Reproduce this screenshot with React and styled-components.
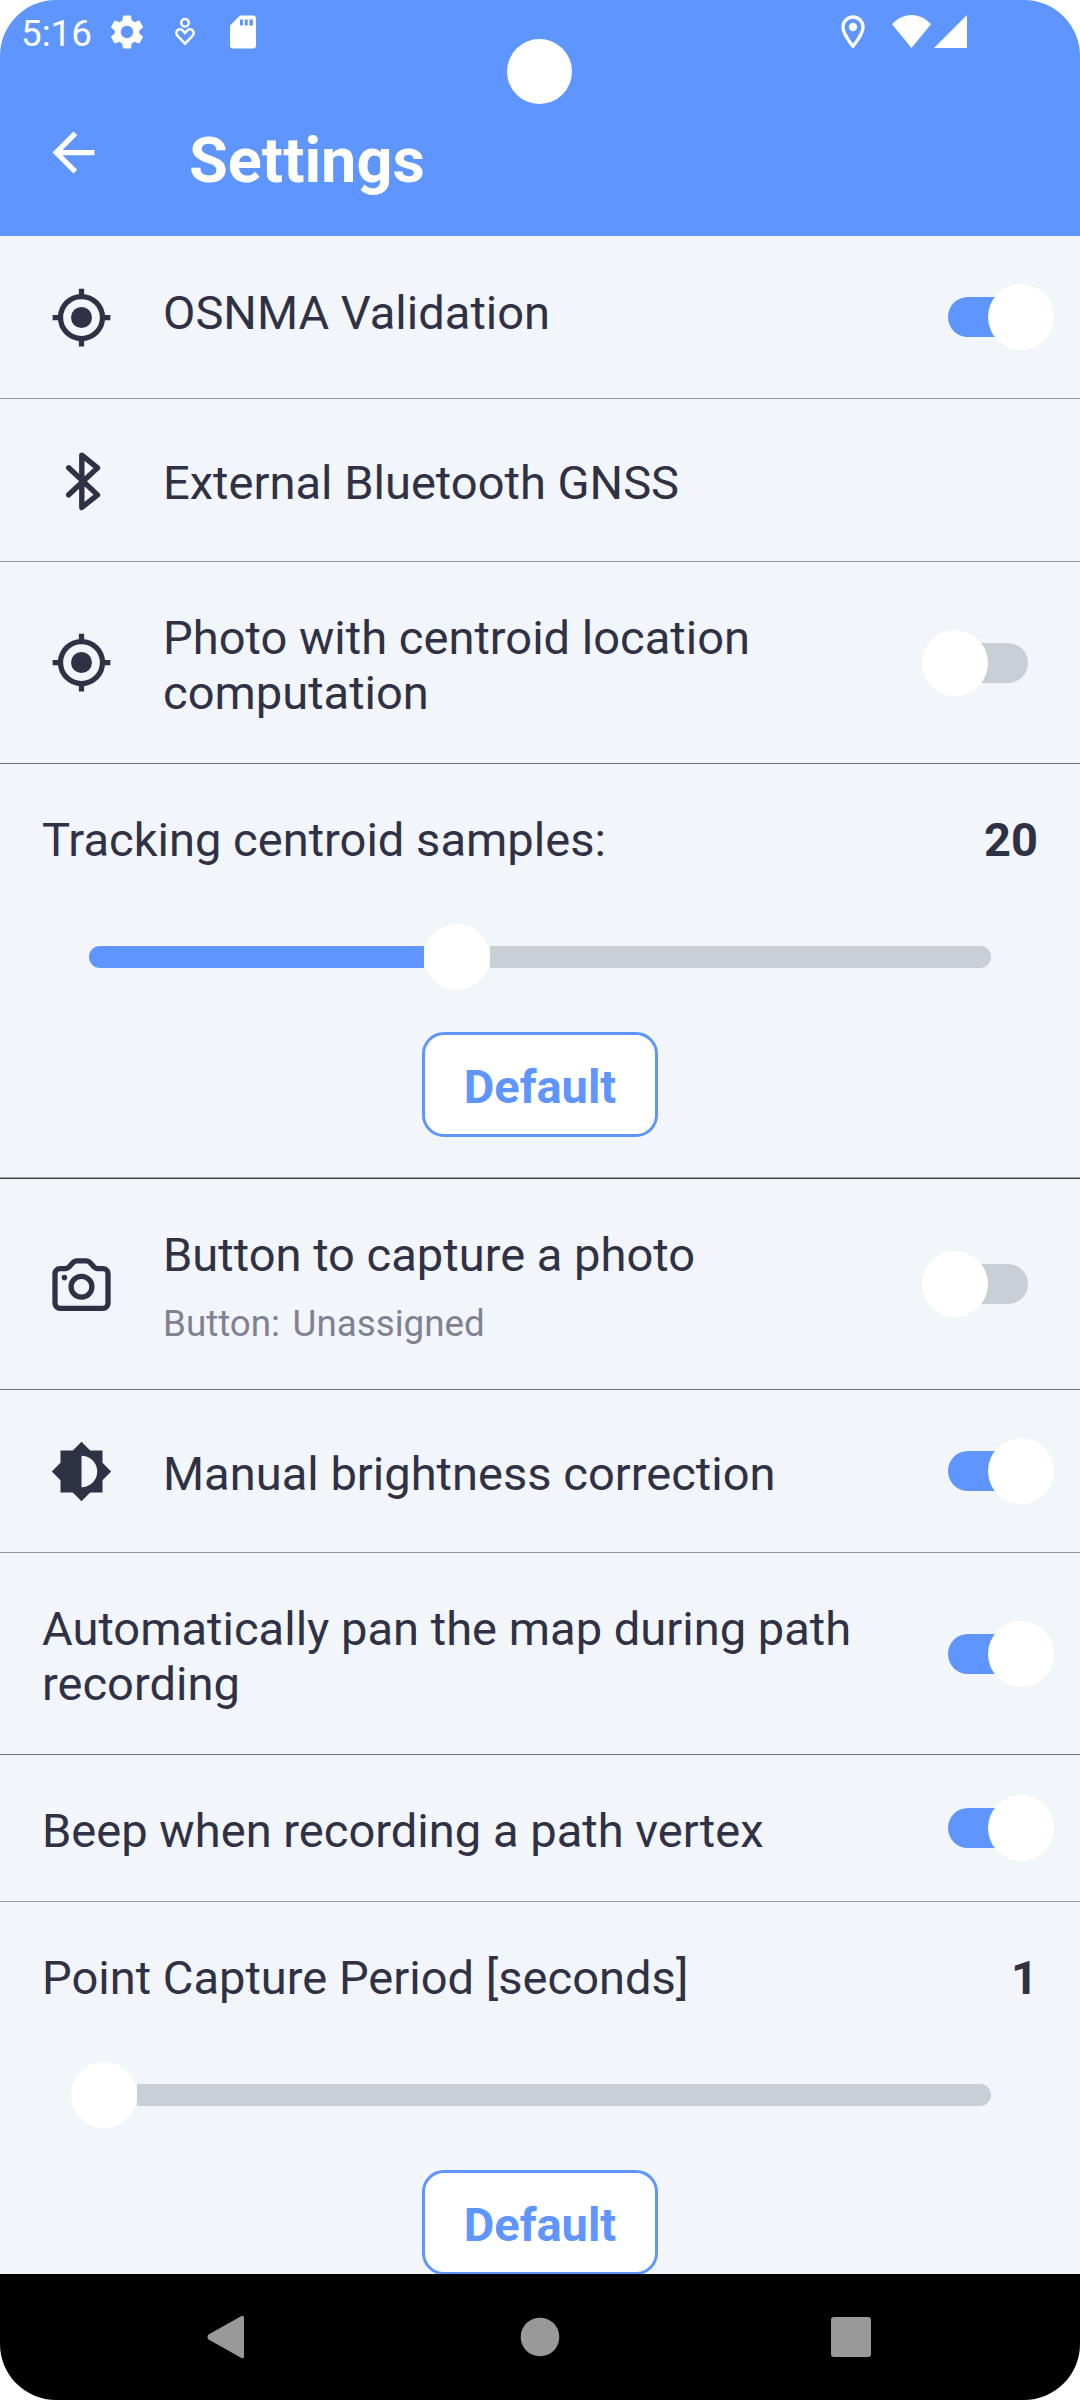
import React from "react";
import styled, { createGlobalStyle, css } from "styled-components";

const color = {
  primary: "#5e95ff",
  surface: "#f2f5fa",
  text: "#2f3144",
  muted: "#7f8291",
  track: "#cacfd6",
  nav: "#999999",
};

const GlobalStyle = createGlobalStyle`
  * { box-sizing: border-box; }
  html, body { margin: 0; padding: 0; background: #fff; }
  svg { display: block; flex: none; }
`;

const Screen = styled.div`
  position: relative;
  display: flex;
  flex-direction: column;
  width: 1080px;
  height: 2400px;
  overflow: hidden;
  border-radius: 56px;
  background: ${color.surface};
  color: ${color.text};
  font-family: Roboto, "Liberation Sans", sans-serif;
`;

const Header = styled.header`
  flex: none;
  height: 236px;
  background: ${color.primary};
  color: #fff;
`;

const StatusBar = styled.div`
  display: flex;
  justify-content: space-between;
  align-items: center;
  height: 63px;
  padding: 0 113px 0 21px;
`;

const StatusGroup = styled.div`
  display: flex;
  align-items: center;
  gap: ${(p) => p.$gap}px;
`;

const Clock = styled.span`
  width: 68px;
  padding-top: 4px;
  font-size: 36.75px;
  line-height: 44px;
  white-space: nowrap;
`;

const SignalPair = styled.div`
  display: flex;
  gap: 3px;
`;

const CameraHole = styled.div`
  position: absolute;
  top: 39px;
  left: 507px;
  width: 65px;
  height: 65px;
  border-radius: 50%;
  background: #fff;
`;

const AppBar = styled.div`
  display: flex;
  align-items: flex-start;
  gap: 84px;
  padding: 58px 42px 0;
`;

const Title = styled.h1`
  margin: 3px 0 0;
  font-size: 63px;
  line-height: 74px;
  font-weight: 700;
`;

const List = styled.main`
  flex: 1;
  min-height: 0;
  overflow: hidden;
`;

const divided = css`
  border-bottom: 1px solid ${(p) => p.$line || "#8f9397"};
`;

const Row = styled.div`
  display: flex;
  align-items: center;
  height: ${(p) => p.$height}px;
  padding: 0 26px 0 42px;
  ${divided}
`;

const IconBox = styled.div`
  flex: none;
  width: 121px;
  padding-left: 8px;
`;

const Texts = styled.div`
  flex: 1;
  display: flex;
  flex-direction: column;
  gap: 20px;
  padding: ${(p) => p.$pad || "5px 0 0"};
`;

const Label = styled.span`
  font-size: 47.08px;
  line-height: 55px;
`;

const Hint = styled.span`
  font-size: 36.75px;
  line-height: 43px;
  color: ${color.muted};
  word-spacing: 3.5px;
`;

const SwitchTrack = styled.div`
  display: flex;
  align-items: center;
  justify-content: ${(p) => (p.$on ? "flex-end" : "flex-start")};
  flex: none;
  width: 80px;
  height: 40px;
  margin: 0 26px;
  border-radius: 20px;
  background: ${(p) => (p.$on ? color.primary : color.track)};
`;

const Knob = styled.div`
  flex: none;
  width: 66px;
  height: 66px;
  border-radius: 50%;
  background: #fff;
`;

const SwitchKnob = styled(Knob)`
  margin: ${(p) => (p.$on ? "0 -26px 0 0" : "0 0 0 -26px")};
`;

const Section = styled.section`
  display: flex;
  flex-direction: column;
  align-items: center;
  height: ${(p) => p.$height}px;
  padding: 48px 42px 0;
  ${divided}
  box-shadow: inset 0 -1px #a6a8ac;
`;

const SectionHead = styled.div`
  align-self: stretch;
  display: flex;
  justify-content: space-between;
`;

const Value = styled.span`
  font-size: 47px;
  line-height: 55px;
  font-weight: 700;
`;

const Slider = styled.div`
  display: flex;
  align-items: center;
  width: 902px;
  margin: 57px 0 42px;
`;

const Filled = styled.div`
  flex: none;
  height: 22px;
  border-radius: 11px 0 0 11px;
  background: ${color.primary};
`;

const SliderKnob = styled(Knob)`
  margin-left: ${(p) => (p.$atStart ? -18 : 0)}px;
`;

const Remaining = styled.div`
  flex: 1;
  height: 22px;
  border-radius: 0 11px 11px 0;
  background: ${color.track};
`;

const DefaultButton = styled.button`
  flex: none;
  width: 236px;
  height: 105px;
  padding: 3px 0 0;
  border: 3px solid ${color.primary};
  border-radius: 22px;
  background: #fff;
  color: ${color.primary};
  font: 700 47px/55px Roboto, "Liberation Sans", sans-serif;
`;

const NavBar = styled.nav`
  flex: none;
  display: flex;
  justify-content: space-between;
  align-items: center;
  height: 126px;
  padding: 0 205px 0 203px;
  background: #000;
`;

const HomeButton = styled.div`
  margin-left: 7px;
`;

const GearIcon = () => (
  <svg width="40" height="40" viewBox="0 0 24 24" fill="#fff">
    <path d="M19.14 12.94c.04-.3.06-.61.06-.94 0-.32-.02-.64-.07-.94l2.03-1.58c.18-.14.23-.41.12-.61l-1.92-3.32c-.12-.22-.37-.29-.59-.22l-2.39.96c-.5-.38-1.03-.7-1.62-.94L14.4 2.81c-.04-.24-.24-.41-.48-.41h-3.84c-.24 0-.43.17-.47.41l-.36 2.54c-.59.24-1.13.57-1.62.94l-2.39-.96c-.22-.08-.47 0-.59.22L2.74 8.87c-.12.21-.08.47.12.61l2.03 1.58c-.05.3-.09.63-.09.94s.02.64.07.94l-2.03 1.58c-.18.14-.23.41-.12.61l1.92 3.32c.12.22.37.29.59.22l2.39-.96c.5.38 1.03.7 1.62.94l.36 2.54c.05.24.24.41.48.41h3.84c.24 0 .44-.17.47-.41l.36-2.54c.59-.24 1.13-.56 1.62-.94l2.39.96c.22.08.47 0 .59-.22l1.92-3.32c.12-.22.07-.47-.12-.61l-2.01-1.58zM12 15.6c-1.98 0-3.6-1.62-3.6-3.6s1.62-3.6 3.6-3.6 3.6 1.62 3.6 3.6-1.62 3.6-3.6 3.6z" transform="translate(12 12) scale(1.03) translate(-12 -12)" />
  </svg>
);

const HeartPersonIcon = () => (
  <svg width="40" height="40" viewBox="0 0 40 40" fill="none" stroke="#fff" strokeWidth="2.5">
    <circle cx="20" cy="10.8" r="3.8" />
    <path d="M20 31.6l-7.2-7.4c-2-2.1-1.9-4.5-.4-5.9 1.7-1.5 4.2-1.2 5.6.4l2 2.3 2-2.3c1.4-1.6 3.9-1.9 5.6-.4 1.5 1.4 1.6 3.8-.4 5.9z" />
  </svg>
);

const SdCardIcon = () => (
  <svg width="40" height="40" viewBox="0 0 40 40" fill="#fff">
    <path fillRule="evenodd" d="M17 3.5h13a3 3 0 0 1 3 3v27a3 3 0 0 1-3 3H10a3 3 0 0 1-3-3V13.5zM17 7.5v6h3v-6zm4.7 0v6h3v-6zm4.7 0v6h3.5v-6z" />
  </svg>
);

const PinIcon = () => (
  <svg width="40" height="40" viewBox="0 0 24 24" fill="#fff">
    <path d="M12 2C8.13 2 5 5.13 5 9c0 5.25 7 13 7 13s7-7.75 7-13c0-3.87-3.13-7-7-7zM7 9c0-2.76 2.24-5 5-5s5 2.24 5 5c0 2.88-2.88 7.19-5 9.88C9.92 16.21 7 11.85 7 9z" />
    <circle cx="12" cy="9" r="2.5" />
  </svg>
);

const WifiIcon = () => (
  <svg width="39" height="33" viewBox="0 0 39 33" fill="#fff">
    <path d="M19.5 33L0 9.3C5 3.5 12 0 19.5 0S34 3.5 39 9.3z" />
  </svg>
);

const CellIcon = () => (
  <svg width="33" height="33" viewBox="0 0 33 33" fill="#fff">
    <path d="M33 0v33H0z" />
  </svg>
);

const BackArrowIcon = () => (
  <svg width="63" height="63" viewBox="0 0 24 24" fill="#fff">
    <path d="M20 11H7.83l5.59-5.59L12 4l-8 8 8 8 1.41-1.41L7.83 13H20v-2z" />
  </svg>
);

const LocationIcon = () => (
  <svg width="63" height="63" viewBox="0 0 24 24" fill="none" stroke={color.text} strokeWidth="2">
    <circle cx="12" cy="12" r="4" fill={color.text} stroke="none" />
    <circle cx="12" cy="12" r="8" />
    <path d="M12 1v3M12 20v3M1 12h3M20 12h3" />
  </svg>
);

const BluetoothIcon = () => (
  <svg width="63" height="63" viewBox="0 0 63 63" fill="none" stroke={color.text} strokeWidth="5.4" strokeLinecap="round" strokeLinejoin="round">
    <path d="M18.7 18.8L47.5 45.9 31.8 58.5V6.2L47.5 18.9 18.7 45.8" />
  </svg>
);

const CameraIcon = () => (
  <svg width="63" height="63" viewBox="0 0.7 63 63" fill="none" stroke={color.text} strokeWidth="5.3" strokeLinejoin="round">
    <path d="M10 16.3h5.5q2 0 3.5-1.6l4-4.4q1.5-1.7 3.5-1.7h10q2 0 3.5 1.7l4 4.4q1.5 1.6 3.5 1.6H53a5 5 0 0 1 5 5V51a5 5 0 0 1-5 5H10a5 5 0 0 1-5-5V21.3a5 5 0 0 1 5-5z" />
    <circle cx="31.5" cy="34.5" r="10.4" />
    <circle cx="14.4" cy="25.3" r="2.8" fill={color.text} stroke="none" />
  </svg>
);

const BrightnessIcon = () => (
  <svg width="63" height="63" viewBox="0 0 24 24" fill={color.text}>
    <path d="M20 15.31L23.31 12 20 8.69V4h-4.69L12 .69 8.69 4H4v4.69L.69 12 4 15.31V20h4.69L12 23.31 15.31 20H20v-4.69zM12 18V6c3.31 0 6 2.69 6 6s-2.69 6-6 6z" />
  </svg>
);

const Switch = ({ on }) => (
  <SwitchTrack $on={on} role="switch" aria-checked={on}>
    <SwitchKnob $on={on} />
  </SwitchTrack>
);

const Setting = ({ icon, label, hint, on, height, line, pad }) => (
  <Row $height={height} $line={line}>
    {icon && <IconBox>{icon}</IconBox>}
    <Texts $pad={pad}>
      <Label>{label}</Label>
      {hint && <Hint>{hint}</Hint>}
    </Texts>
    {on !== undefined && <Switch on={on} />}
  </Row>
);

const SliderSetting = ({ label, value, filled, height, line }) => (
  <Section $height={height} $line={line}>
    <SectionHead>
      <Label>{label}</Label>
      <Value>{value}</Value>
    </SectionHead>
    <Slider>
      <Filled style={{ width: filled }} />
      <SliderKnob $atStart={filled === 0} />
      <Remaining />
    </Slider>
    <DefaultButton>Default</DefaultButton>
  </Section>
);

export default function App() {
  return (
    <>
      <GlobalStyle />
      <Screen>
        <Header>
          <StatusBar>
            <StatusGroup $gap={18}>
              <Clock>5:16</Clock>
              <GearIcon />
              <HeartPersonIcon />
              <SdCardIcon />
            </StatusGroup>
            <StatusGroup $gap={19}>
              <PinIcon />
              <SignalPair>
                <WifiIcon />
                <CellIcon />
              </SignalPair>
            </StatusGroup>
          </StatusBar>
          <AppBar>
            <BackArrowIcon />
            <Title>Settings</Title>
          </AppBar>
          <CameraHole />
        </Header>
        <List>
          <Setting icon={<LocationIcon />} label="OSNMA Validation" on={true} height={163} pad="0 0 10px" />
          <Setting icon={<BluetoothIcon />} label="External Bluetooth GNSS" height={163} />
          <Setting icon={<LocationIcon />} label="Photo with centroid location computation" on={false} height={202} line="#6e7174" />
          <SliderSetting label="Tracking centroid samples:" value="20" filled={335} height={415} line="#39393d" />
          <Setting icon={<CameraIcon />} label="Button to capture a photo" hint="Button: Unassigned" on={false} height={211} line="#6e7174" pad="3px 0 0" />
          <Setting icon={<BrightnessIcon />} label="Manual brightness correction" on={true} height={163} />
          <Setting label="Automatically pan the map during path recording" on={true} height={202} line="#6e7174" />
          <Setting label="Beep when recording a path vertex" on={true} height={147} line="#9b9fa3" />
          <SliderSetting label="Point Capture Period [seconds]" value="1" filled={0} height={415} />
        </List>
        <NavBar>
          <svg width="42" height="44" viewBox="0 0 42 44" fill={color.nav}>
            <path d="M38.5 1Q41 0 41 3V41Q41 44 38.5 43L5.5 24.5Q3.5 22 5.5 19.5z" />
          </svg>
          <HomeButton>
            <svg width="40" height="40" viewBox="0 0 40 40" fill={color.nav}>
              <circle cx="20" cy="20" r="19.3" />
            </svg>
          </HomeButton>
          <svg width="48" height="40" viewBox="0 0 48 40" fill={color.nav}>
            <rect x="4" y="0" width="40" height="40" rx="3" />
          </svg>
        </NavBar>
      </Screen>
    </>
  );
}
